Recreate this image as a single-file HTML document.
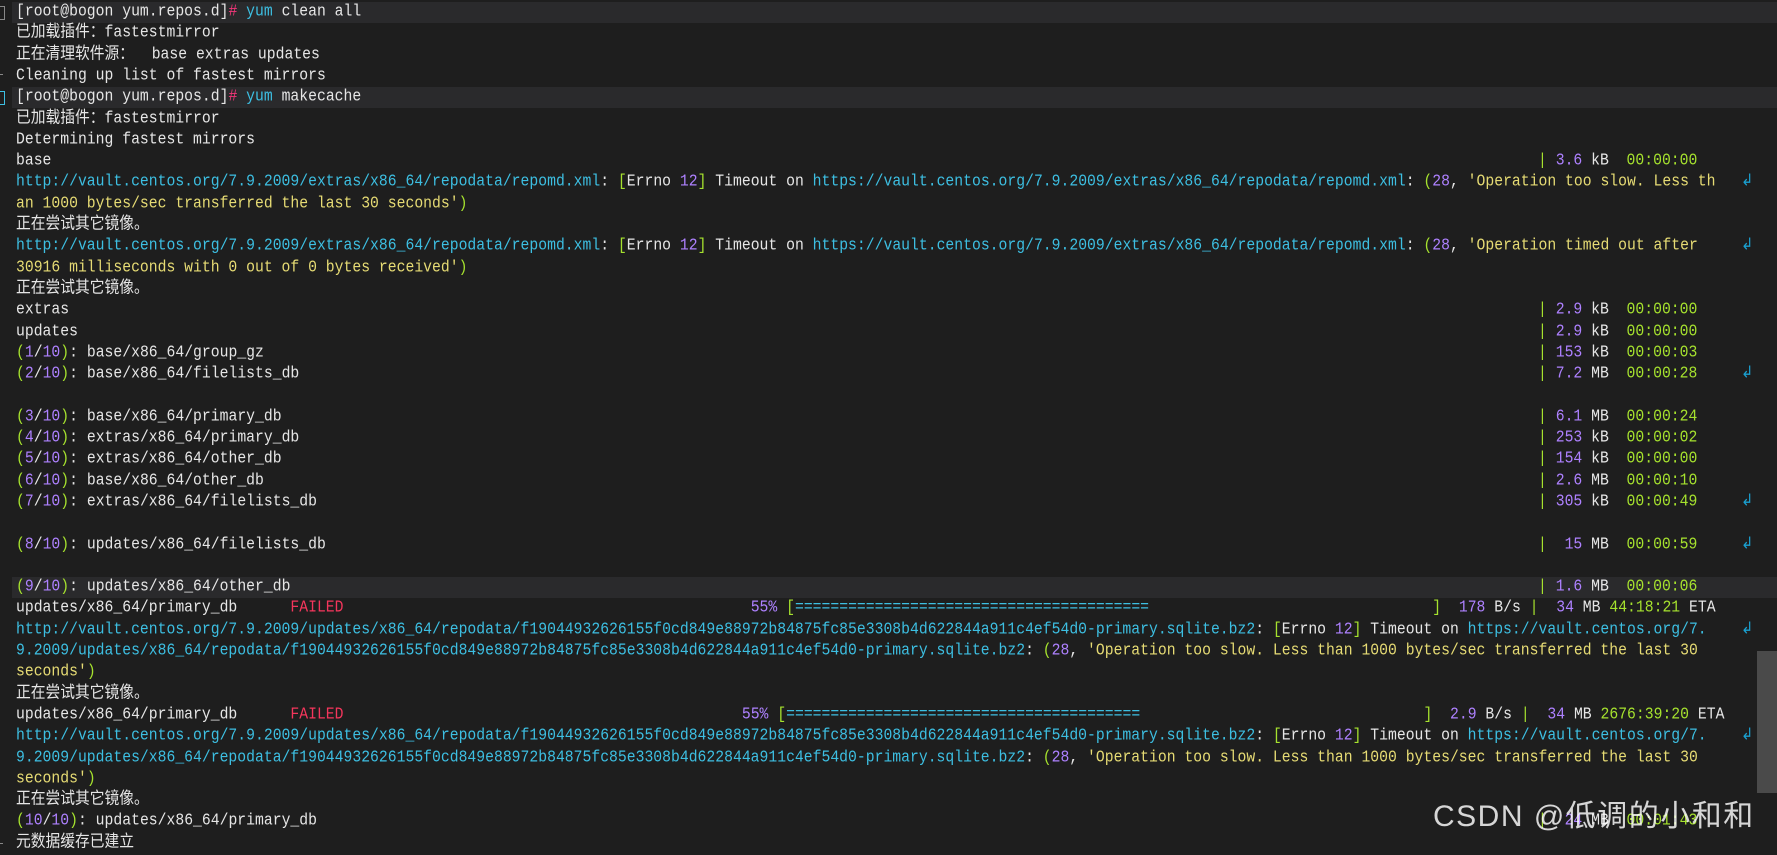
<!DOCTYPE html>
<html><head><meta charset="utf-8"><style>
html,body{margin:0;padding:0;background:#1e1e1e;width:1777px;height:852px;overflow:hidden}
.t{position:absolute;left:16px;white-space:pre;font-family:"Liberation Mono","Noto Sans CJK SC",monospace;font-size:14.75px;line-height:21.3px;height:21.3px;color:#e6e6e6;transform:scaleY(1.12);transform-origin:0 50%}
.hl{position:absolute;left:12px;right:0;height:21.3px;background:#2a2a2c}
.rc{left:1538px}
.wr{left:1741px;color:#1aa0d0}
.c{color:#3dbfe2}.y{color:#e6db74}.g{color:#a6e22e}.p{color:#ae81ff}.r{color:#f5365c}.pk{color:#f5367a}
.mk{position:absolute;left:0;width:4px;height:12px;border:1px solid #888;border-left:none}
</style></head><body>
<div class="hl" style="top:2px"></div>
<div class="hl" style="top:87.2px"></div>
<div class="hl" style="top:577.1px"></div>
<div class="mk" style="top:6px"></div>
<div class="mk" style="top:91px;border-color:#3dbfe2"></div>
<div style="position:absolute;left:0;top:74px;width:3px;height:1px;background:#888"></div>
<div style="position:absolute;left:0;top:843px;width:3px;height:1px;background:#888"></div>

<div class="t" style="top:2px">[root@bogon yum.repos.d]<span class="pk">#</span> <span class="c">yum</span> clean all</div>
<div class="t" style="top:23.3px">已加载插件：fastestmirror</div>
<div class="t" style="top:44.6px">正在清理软件源：  base extras updates</div>
<div class="t" style="top:65.9px">Cleaning up list of fastest mirrors</div>
<div class="t" style="top:87.2px">[root@bogon yum.repos.d]<span class="pk">#</span> <span class="c">yum</span> makecache</div>
<div class="t" style="top:108.5px">已加载插件：fastestmirror</div>
<div class="t" style="top:129.8px">Determining fastest mirrors</div>
<div class="t" style="top:151.1px">base</div>
<div class="t" style="top:172.4px"><span class="c">http://vault.centos.org/7.9.2009/extras/x86_64/repodata/repomd.xml</span>: <span class="g">[</span>Errno <span class="p">12</span><span class="g">]</span> Timeout on <span class="c">https://vault.centos.org/7.9.2009/extras/x86_64/repodata/repomd.xml</span>: <span class="g">(</span><span class="p">28</span>, <span class="y">'Operation too slow. Less th</span></div>
<div class="t" style="top:193.7px"><span class="y">an 1000 bytes/sec transferred the last 30 seconds'</span><span class="g">)</span></div>
<div class="t" style="top:215px">正在尝试其它镜像。</div>
<div class="t" style="top:236.3px"><span class="c">http://vault.centos.org/7.9.2009/extras/x86_64/repodata/repomd.xml</span>: <span class="g">[</span>Errno <span class="p">12</span><span class="g">]</span> Timeout on <span class="c">https://vault.centos.org/7.9.2009/extras/x86_64/repodata/repomd.xml</span>: <span class="g">(</span><span class="p">28</span>, <span class="y">'Operation timed out after</span></div>
<div class="t" style="top:257.6px"><span class="y">30916 milliseconds with 0 out of 0 bytes received'</span><span class="g">)</span></div>
<div class="t" style="top:278.9px">正在尝试其它镜像。</div>
<div class="t" style="top:300.2px">extras</div>
<div class="t" style="top:321.5px">updates</div>
<div class="t" style="top:342.8px"><span class="g">(</span><span class="p">1</span>/<span class="p">10</span><span class="g">)</span>: base/x86_64/group_gz</div>
<div class="t" style="top:364.1px"><span class="g">(</span><span class="p">2</span>/<span class="p">10</span><span class="g">)</span>: base/x86_64/filelists_db</div>
<div class="t" style="top:406.7px"><span class="g">(</span><span class="p">3</span>/<span class="p">10</span><span class="g">)</span>: base/x86_64/primary_db</div>
<div class="t" style="top:428px"><span class="g">(</span><span class="p">4</span>/<span class="p">10</span><span class="g">)</span>: extras/x86_64/primary_db</div>
<div class="t" style="top:449.3px"><span class="g">(</span><span class="p">5</span>/<span class="p">10</span><span class="g">)</span>: extras/x86_64/other_db</div>
<div class="t" style="top:470.6px"><span class="g">(</span><span class="p">6</span>/<span class="p">10</span><span class="g">)</span>: base/x86_64/other_db</div>
<div class="t" style="top:491.9px"><span class="g">(</span><span class="p">7</span>/<span class="p">10</span><span class="g">)</span>: extras/x86_64/filelists_db</div>
<div class="t" style="top:534.5px"><span class="g">(</span><span class="p">8</span>/<span class="p">10</span><span class="g">)</span>: updates/x86_64/filelists_db</div>
<div class="t" style="top:577.1px"><span class="g">(</span><span class="p">9</span>/<span class="p">10</span><span class="g">)</span>: updates/x86_64/other_db</div>
<div class="t" style="top:598.4px">updates/x86_64/primary_db      <span class="r">FAILED</span>                                              <span class="p">55%</span> <span class="g">[</span><span class="c">========================================</span>                                <span class="g">]</span>  <span class="p">178</span> B/s <span class="g">|</span>  <span class="p">34</span> MB <span class="g">44:18:21</span> ETA</div>
<div class="t" style="top:619.7px"><span class="c">http://vault.centos.org/7.9.2009/updates/x86_64/repodata/f19044932626155f0cd849e88972b84875fc85e3308b4d622844a911c4ef54d0-primary.sqlite.bz2</span>: <span class="g">[</span>Errno <span class="p">12</span><span class="g">]</span> Timeout on <span class="c">https://vault.centos.org/7.</span></div>
<div class="t" style="top:641px"><span class="c">9.2009/updates/x86_64/repodata/f19044932626155f0cd849e88972b84875fc85e3308b4d622844a911c4ef54d0-primary.sqlite.bz2</span>: <span class="g">(</span><span class="p">28</span>, <span class="y">'Operation too slow. Less than 1000 bytes/sec transferred the last 30</span></div>
<div class="t" style="top:662.3px"><span class="y">seconds'</span><span class="g">)</span></div>
<div class="t" style="top:683.6px">正在尝试其它镜像。</div>
<div class="t" style="top:704.9px">updates/x86_64/primary_db      <span class="r">FAILED</span>                                             <span class="p">55%</span> <span class="g">[</span><span class="c">========================================</span>                                <span class="g">]</span>  <span class="p">2.9</span> B/s <span class="g">|</span>  <span class="p">34</span> MB <span class="g">2676:39:20</span> ETA</div>
<div class="t" style="top:726.2px"><span class="c">http://vault.centos.org/7.9.2009/updates/x86_64/repodata/f19044932626155f0cd849e88972b84875fc85e3308b4d622844a911c4ef54d0-primary.sqlite.bz2</span>: <span class="g">[</span>Errno <span class="p">12</span><span class="g">]</span> Timeout on <span class="c">https://vault.centos.org/7.</span></div>
<div class="t" style="top:747.5px"><span class="c">9.2009/updates/x86_64/repodata/f19044932626155f0cd849e88972b84875fc85e3308b4d622844a911c4ef54d0-primary.sqlite.bz2</span>: <span class="g">(</span><span class="p">28</span>, <span class="y">'Operation too slow. Less than 1000 bytes/sec transferred the last 30</span></div>
<div class="t" style="top:768.8px"><span class="y">seconds'</span><span class="g">)</span></div>
<div class="t" style="top:790.1px">正在尝试其它镜像。</div>
<div class="t" style="top:811.4px"><span class="g">(</span><span class="p">10</span>/<span class="p">10</span><span class="g">)</span>: updates/x86_64/primary_db</div>
<div class="t" style="top:832.7px">元数据缓存已建立</div>

<div class="t rc" style="top:151.1px"><span class="g">|</span> <span class="p">3.6</span> kB  <span class="g">00:00:00</span></div>
<div class="t rc" style="top:300.2px"><span class="g">|</span> <span class="p">2.9</span> kB  <span class="g">00:00:00</span></div>
<div class="t rc" style="top:321.5px"><span class="g">|</span> <span class="p">2.9</span> kB  <span class="g">00:00:00</span></div>
<div class="t rc" style="top:342.8px"><span class="g">|</span> <span class="p">153</span> kB  <span class="g">00:00:03</span></div>
<div class="t rc" style="top:364.1px"><span class="g">|</span> <span class="p">7.2</span> MB  <span class="g">00:00:28</span></div>
<div class="t rc" style="top:406.7px"><span class="g">|</span> <span class="p">6.1</span> MB  <span class="g">00:00:24</span></div>
<div class="t rc" style="top:428px"><span class="g">|</span> <span class="p">253</span> kB  <span class="g">00:00:02</span></div>
<div class="t rc" style="top:449.3px"><span class="g">|</span> <span class="p">154</span> kB  <span class="g">00:00:00</span></div>
<div class="t rc" style="top:470.6px"><span class="g">|</span> <span class="p">2.6</span> MB  <span class="g">00:00:10</span></div>
<div class="t rc" style="top:491.9px"><span class="g">|</span> <span class="p">305</span> kB  <span class="g">00:00:49</span></div>
<div class="t rc" style="top:534.5px"><span class="g">|</span>  <span class="p">15</span> MB  <span class="g">00:00:59</span></div>
<div class="t rc" style="top:577.1px"><span class="g">|</span> <span class="p">1.6</span> MB  <span class="g">00:00:06</span></div>
<div class="t rc" style="top:811.4px"><span class="g">|</span>  <span class="p">24</span> MB  <span class="g">00:01:43</span></div>

<div class="t wr" style="top:172.4px">↲</div>
<div class="t wr" style="top:236.3px">↲</div>
<div class="t wr" style="top:364.1px">↲</div>
<div class="t wr" style="top:491.9px">↲</div>
<div class="t wr" style="top:534.5px">↲</div>
<div class="t wr" style="top:619.7px">↲</div>
<div class="t wr" style="top:726.2px">↲</div>

<div style="position:absolute;left:1757px;top:651px;width:20px;height:142px;background:#4a4a4a"></div>
<div style="position:absolute;left:1433px;top:800px;font-family:'Liberation Sans','Noto Sans CJK SC',sans-serif;font-size:30px;letter-spacing:1.5px;line-height:34px;color:rgba(255,255,255,0.82);white-space:nowrap">CSDN @低调的小和和</div>
</body></html>
